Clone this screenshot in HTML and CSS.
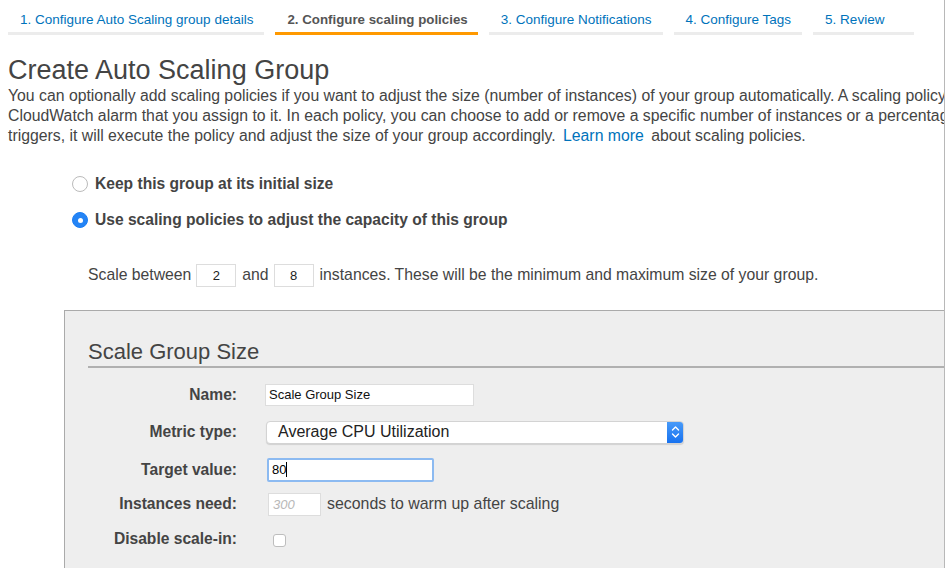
FILE: index.html
```html
<!DOCTYPE html>
<html>
<head>
<meta charset="utf-8">
<link rel="stylesheet" href="styles.css">
</head>
<body>
<div class="page">
  <nav class="tabs">
    <a class="tab">1. Configure Auto Scaling group details</a>
    <a class="tab active">2. Configure scaling policies</a>
    <a class="tab">3. Configure Notifications</a>
    <a class="tab">4. Configure Tags</a>
    <a class="tab">5. Review</a>
  </nav>
  <h1 class="title">Create Auto Scaling Group</h1>
  <p class="intro">You can optionally add scaling policies if you want to adjust the size (number of instances) of your group automatically. A scaling policy<br>CloudWatch alarm that you assign to it. In each policy, you can choose to add or remove a specific number of instances or a percentage<br>triggers, it will execute the policy and adjust the size of your group accordingly. <a class="link">Learn more</a> about scaling policies.</p>

  <div class="options">
    <label class="option"><span class="radio"></span>Keep this group at its initial size</label>
    <label class="option"><span class="radio checked"></span>Use scaling policies to adjust the capacity of this group</label>
  </div>

  <div class="range">
    Scale between <span class="num">2</span> and <span class="num">8</span> instances. These will be the minimum and maximum size of your group.
  </div>

  <section class="panel">
    <h2 class="panel-title">Scale Group Size</h2>
    <div class="form">
      <div class="row r-name">
        <div class="label">Name:</div>
        <div class="field"><span class="input name-input">Scale Group Size</span></div>
      </div>
      <div class="row r-metric">
        <div class="label">Metric type:</div>
        <div class="field">
          <span class="select">
            <span class="select-text">Average CPU Utilization</span>
            <span class="stepper">
              <svg width="9" height="14" viewBox="0 0 9 14"><path d="M1.5 5 L4.5 2 L7.5 5 M1.5 9 L4.5 12 L7.5 9" fill="none" stroke="#fff" stroke-width="1.4" stroke-linecap="round" stroke-linejoin="round"/></svg>
            </span>
          </span>
        </div>
      </div>
      <div class="row r-target">
        <div class="label">Target value:</div>
        <div class="field"><span class="input target-input">80<span class="caret"></span></span></div>
      </div>
      <div class="row r-warm">
        <div class="label">Instances need:</div>
        <div class="field"><span class="input warm-input">300</span><span class="warm-text">seconds to warm up after scaling</span></div>
      </div>
      <div class="row r-disable">
        <div class="label">Disable scale-in:</div>
        <div class="field"><span class="checkbox"></span></div>
      </div>
    </div>
  </section>
</div>
</body>
</html>
```

FILE: styles.css
```css
html, body {
  margin: 0;
  padding: 0;
  background: #fff;
}
body {
  font-family: "Liberation Sans", Arial, Helvetica, sans-serif;
  color: #444;
}
.page {
  width: 945px;
  height: 568px;
  box-sizing: border-box;
  border-right: 1px solid #b8b8b8;
  overflow: hidden;
  padding-left: 8px;
}
.tabs {
  display: flex;
  gap: 11px;
  padding-top: 11px;
}
.tab {
  display: block;
  min-width: 78px;
  padding: 0 11px 0 12px;
  height: 21px;
  line-height: 17px;
  font-size: 13.5px;
  color: #0073bb;
  border-bottom: 3px solid #ececec;
  white-space: nowrap;
}
.tab.active {
  color: #555;
  font-weight: bold;
  font-size: 13.3px;
  padding-right: 10px;
  border-bottom-color: #ff9900;
}
.title {
  margin: 20px 0 0 0;
  font-size: 27px;
  font-weight: normal;
  line-height: 30px;
  color: #444;
}
.intro {
  margin: 1px 0 0 0;
  font-size: 15.8px;
  line-height: 20px;
  white-space: nowrap;
  color: #444;
}
.link {
  color: #0073bb;
  margin: 0 3px 0 3px;
}
.options {
  margin-top: 28px;
  padding-left: 64px;
  display: flex;
  flex-direction: column;
  gap: 16px;
}
.option {
  display: flex;
  align-items: center;
  height: 20px;
  font-size: 15.6px;
  font-weight: bold;
  color: #444;
}
.radio {
  width: 14px;
  height: 14px;
  border: 1px solid #bbb;
  border-radius: 50%;
  background: #fff;
  margin-right: 7px;
  box-sizing: content-box;
  position: relative;
}
.radio.checked {
  border-color: #1b7ef4;
  background: #2484f5;
}
.radio.checked::after {
  content: "";
  position: absolute;
  left: 5px;
  top: 5px;
  width: 5px;
  height: 5px;
  border-radius: 50%;
  background: #fff;
}
.range {
  margin-top: 34px;
  padding-left: 80px;
  font-size: 15.75px;
  height: 22px;
  line-height: 22px;
  display: flex;
  align-items: center;
  white-space: nowrap;
  color: #444;
}
.num {
  display: inline-block;
  width: 38px;
  height: 21px;
  line-height: 21px;
  border: 1px solid #ddd;
  background: #fff;
  text-align: center;
  font-size: 13px;
  color: #222;
  margin: 0 6px 0 5px;
}
.panel {
  margin-top: 24px;
  margin-left: 56px;
  border-top: 1px solid #aaa;
  border-left: 1px solid #aaa;
  background: #eeeeee;
  height: 300px;
  padding-left: 23px;
}
.panel-title {
  margin: 0;
  padding-top: 28px;
  font-size: 22px;
  font-weight: normal;
  line-height: 26px;
  color: #444;
  border-bottom: 2px solid #b0b0b0;
  padding-bottom: 1px;
}
.form {
  margin-left: -23px;
  padding-top: 8px;
}
.row {
  display: grid;
  grid-template-columns: 172px 1fr;
  column-gap: 28px;
  align-items: center;
}
.r-name { height: 37px; }
.r-metric { height: 38px; }
.r-target { height: 37px; }
.r-warm { height: 32px; }
.r-disable { height: 38px; }
.label {
  text-align: right;
  font-size: 15.6px;
  font-weight: bold;
  color: #444;
  white-space: nowrap;
}
.field {
  display: flex;
  align-items: center;
}
.input {
  display: inline-block;
  box-sizing: border-box;
  background: #fff;
  border: 1px solid #ddd;
  font-size: 13px;
  color: #111;
  white-space: nowrap;
}
.name-input {
  width: 209px;
  height: 22px;
  line-height: 20px;
  padding-left: 3px;
}
.select {
  margin-left: 1px;
  width: 418px;
  height: 23px;
  box-sizing: border-box;
  background: #fff;
  border: 1px solid #d3d3d3;
  border-radius: 4px;
  box-shadow: 0 1px 1px rgba(0,0,0,0.12);
  display: flex;
  align-items: center;
  justify-content: space-between;
  overflow: hidden;
}
.select-text {
  padding-left: 11px;
  font-size: 16px;
  color: #222;
}
.stepper {
  width: 17px;
  height: 23px;
  margin-right: -1px;
  background: linear-gradient(#4a9cf9, #1570ef);
  display: flex;
  align-items: center;
  justify-content: center;
}
.target-input {
  margin-left: 2px;
  width: 167px;
  height: 24px;
  line-height: 20px;
  border: 2px solid #8cbaf1;
  border-radius: 2px;
  padding-left: 3px;
  font-size: 13px;
  color: #000;
}
.caret {
  display: inline-block;
  width: 1px;
  height: 15px;
  background: #000;
  vertical-align: -3px;
}
.warm-input {
  margin-left: 3px;
  width: 53px;
  height: 23px;
  line-height: 21px;
  padding-left: 4px;
  font-style: italic;
  color: #b8b8b8;
}
.warm-text {
  margin-left: 6px;
  font-size: 15.9px;
  color: #444;
}
.checkbox {
  margin-left: 8px;
  margin-top: 3px;
  width: 13px;
  height: 13px;
  box-sizing: border-box;
  border: 1px solid #bdbdbd;
  border-radius: 3px;
  background: #fff;
}
```
